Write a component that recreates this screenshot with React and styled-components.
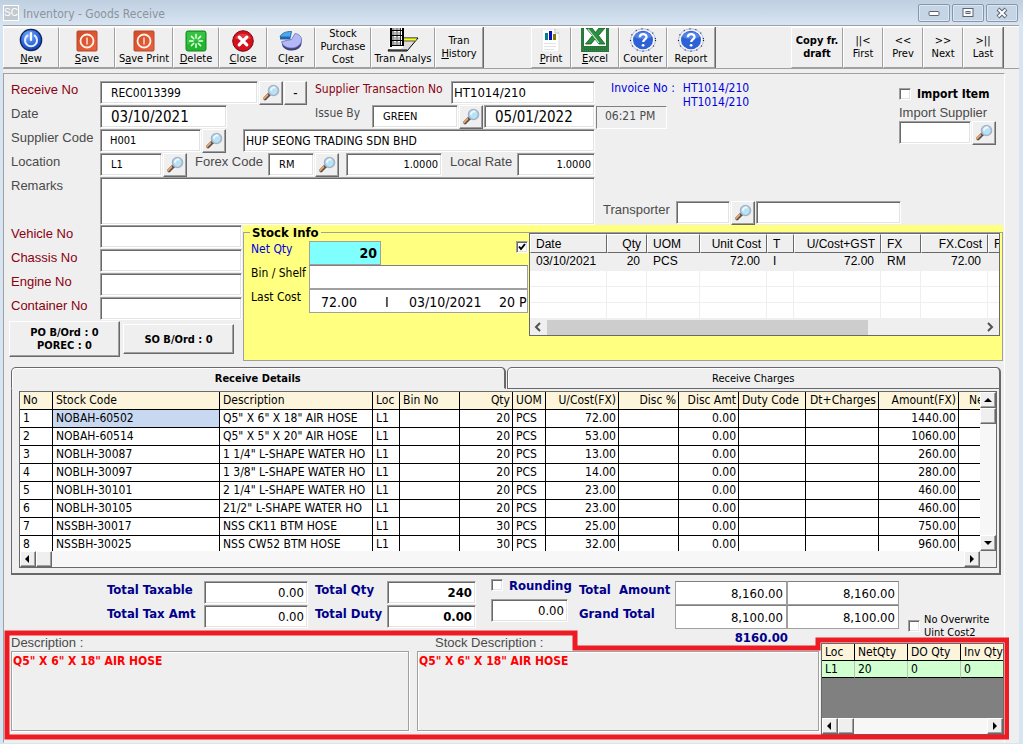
import React, { useState } from 'react'
import styled, { createGlobalStyle, css } from 'styled-components'

const tahoma = '"DejaVu Sans Condensed", "DejaVu Sans", sans-serif'
const arial = '"Liberation Sans", Arial, sans-serif'

const stockRows = [
  ['NOBAH-60502', 'Q5" X 6" X 18" AIR HOSE', '20', '72.00', '1440.00'],
  ['NOBAH-60514', 'Q5" X 5" X 20" AIR HOSE', '20', '53.00', '1060.00'],
  ['NOBLH-30087', '1 1/4" L-SHAPE WATER HO', '20', '13.00', '260.00'],
  ['NOBLH-30097', '1 3/8" L-SHAPE WATER HO', '20', '14.00', '280.00'],
  ['NOBLH-30101', '2 1/4" L-SHAPE WATER HO', '20', '23.00', '460.00'],
  ['NOBLH-30105', '21/2" L-SHAPE WATER HO', '20', '23.00', '460.00'],
  ['NSSBH-30017', 'NSS CK11 BTM HOSE', '30', '25.00', '750.00'],
  ['NSSBH-30025', 'NSS CW52 BTM HOSE', '30', '32.00', '960.00'],
]

const detailCols = [
  { name: 'No', w: 33 },
  { name: 'Stock Code', w: 167 },
  { name: 'Description', w: 153 },
  { name: 'Loc', w: 27 },
  { name: 'Bin No', w: 60 },
  { name: 'Qty', w: 53, right: true },
  { name: 'UOM', w: 33 },
  { name: 'U/Cost(FX)', w: 73, right: true },
  { name: 'Disc %', w: 60, right: true },
  { name: 'Disc Amt', w: 60, right: true },
  { name: 'Duty Code', w: 67 },
  { name: 'Dt+Charges', w: 73, right: true },
  { name: 'Amount(FX)', w: 80, right: true },
  { name: 'Net', w: 60, pad: 10 },
]

const costCols = [
  { name: 'Date', w: 77, value: '03/10/2021' },
  { name: 'Qty', w: 40, right: true, value: '20' },
  { name: 'UOM', w: 53, value: 'PCS' },
  { name: 'Unit Cost', w: 67, right: true, value: '72.00' },
  { name: 'T', w: 27, value: 'I' },
  { name: 'U/Cost+GST', w: 87, right: true, value: '72.00' },
  { name: 'FX', w: 40, value: 'RM' },
  { name: 'FX.Cost', w: 67, right: true, value: '72.00' },
  { name: 'FX Rate', w: 60, value: '' },
]

/* ---------- icons ---------- */

const PowerIcon = () => (
  <svg width="24" height="24" viewBox="0 0 24 24">
    <defs>
      <radialGradient id="pw" cx="40%" cy="30%" r="75%">
        <stop offset="0" stopColor="#7fb2ff" />
        <stop offset="0.6" stopColor="#2b63dd" />
        <stop offset="1" stopColor="#123aa5" />
      </radialGradient>
    </defs>
    <circle cx="12" cy="12" r="10.7" fill="url(#pw)" stroke="#0d2358" strokeWidth="1.2" />
    <path d="M8.3 7.6a6 6 0 1 0 7.4 0" fill="none" stroke="#e6efff" strokeWidth="2" strokeLinecap="round" />
    <path d="M12 5v7" stroke="#fff" strokeWidth="2.2" strokeLinecap="round" />
  </svg>
)

const SaveIcon = () => (
  <svg width="22" height="22" viewBox="0 0 22 22">
    <defs>
      <linearGradient id="sv" x1="0" y1="0" x2="1" y2="1">
        <stop offset="0" stopColor="#d04a26" />
        <stop offset="1" stopColor="#ea6440" />
      </linearGradient>
    </defs>
    <rect x="1" y="1" width="20" height="20" rx="1" fill="url(#sv)" stroke="#b5492a" />
    <circle cx="11" cy="11" r="6.5" fill="none" stroke="#fff0e8" strokeWidth="1.8" />
    <path d="M11 7.5v7" stroke="#f8c9b8" strokeWidth="1.8" />
  </svg>
)

const DeleteIcon = () => (
  <svg width="22" height="22" viewBox="0 0 22 22">
    <rect x="1" y="1" width="20" height="20" rx="2" fill="#22b52f" stroke="#14861f" />
    <path d="M2 2h18v7q-9 1-18 6z" fill="#45cd4f" opacity="0.6" />
    <g stroke="#e9ffe9" strokeWidth="1.5" strokeLinecap="round">
      <path d="M11 4.5v3.500M11 14v3.500M4.500 11H8M14 11h3.500M6.400 6.400l2.400 2.400M13.200 13.200l2.400 2.400M15.600 6.400l-2.400 2.400M8.800 13.200l-2.400 2.400" />
    </g>
  </svg>
)

const CloseIcon = () => (
  <svg width="22" height="22" viewBox="0 0 22 22">
    <circle cx="11" cy="11" r="10.3" fill="#d4101d" stroke="#7d0a12" strokeWidth="1" />
    <path d="M3 8.5a8.5 7 0 0 1 16 0q-8 3-16 0z" fill="#f0616a" opacity="0.5" />
    <path d="M7.2 7.2l7.6 7.6M14.8 7.2l-7.6 7.6" stroke="#fff" strokeWidth="3.2" strokeLinecap="round" />
  </svg>
)

const PieIcon = () => (
  <svg width="24" height="22" viewBox="0 0 24 22">
    <path d="M3 12v2.500c1 4 5 6 10 6s9.500-3 9.500-7.500V9z" fill="#3b3f7a" />
    <path d="M12.500 9.500L16 3.500C20 4 22.500 6.500 22.500 9.700c0 4.600-4.400 8.300-10 8.300-5.200 0-9.500-2.500-9.800-6.500z" fill="#b4b8f6" stroke="#6a6fc0" strokeWidth="0.800" />
    <path d="M11.500 7L12.500 1.500C7 1.200 2 3.500 1 7z" fill="#4ba8ee" stroke="#1c5f9c" strokeWidth="0.800" />
    <path d="M1 7h10.500v2.500H1z" fill="#1d66ae" />
  </svg>
)

const AnalysIcon = () => (
  <svg width="32" height="26" viewBox="0 0 32 26">
    <path d="M14 12h17L20 25H1l3-5z" fill="#dcdcdc" stroke="#000" />
    <path d="M17 12.500h13l-2 2.500H17z" fill="#ff0" />
    <path d="M17 15h11" stroke="#555" />
    <path d="M4 0h12v21l-2 2H2z" fill="#fff" />
    <path d="M4 0v21M16 0v20" stroke="#000" strokeWidth="2" />
    <path d="M6 0v20M10 0v20M13.500 0v20" stroke="#333" strokeWidth="1" />
    <path d="M4 4.500h12M4 9.500h12M4 14.500h12M4 19.500h12" stroke="#000" strokeWidth="1" />
    <path d="M7 1h2v3H7zM11 1h2v3h-2zM7 6h2v3H7zM11 6h2v3h-2zM7 11h2v3H7zM11 11h2v3h-2zM7 16h2v3H7zM11 16h2v3h-2z" fill="#b8b8b8" />
    <path d="M2 24h18" stroke="#000" />
  </svg>
)

const PrintIcon = () => (
  <svg width="20" height="23" viewBox="0 0 20 23">
    <path d="M1 0h13l4 4v19H1z" fill="#fff" stroke="#e2e2e2" />
    <path d="M14 0v4h4" fill="none" stroke="#bdbdbd" />
    <rect x="4" y="4" width="3" height="7" fill="#008080" />
    <rect x="8" y="2" width="3" height="9" fill="#0a0ac8" />
    <rect x="12" y="5" width="3" height="6" fill="#808000" />
    <path d="M3 14.500h12M3 17.500h12M3 20.500h10" stroke="#dfe3ea" />
  </svg>
)

const ExcelIcon = () => (
  <svg width="28" height="26" viewBox="0 0 28 26">
    <path d="M0 0h28v26H0z" fill="#1f7a33" />
    <path d="M3 0h22v20H3z" fill="#fff" />
    <path d="M1 1v24M27 1v24M0 22h28M0 24.500h28" stroke="#5c7563" strokeWidth="1" strokeDasharray="1 1" />
    <path d="M5 2h6l3.500 4.500L18 2h6l-6.500 7.500L24 18h-6l-4-5-4 5H4.500l7-8.500z" fill="#2a9140" stroke="#12561f" strokeWidth="0.800" />
    <path d="M7 3l11 14" stroke="#c8ecce" strokeWidth="1.200" />
  </svg>
)

const HelpIcon = () => (
  <svg width="28" height="24" viewBox="0 0 28 24">
    <ellipse cx="14" cy="12" rx="12.500" ry="11.200" fill="#f5f5fc" stroke="#b9badb" strokeWidth="1" />
    <ellipse cx="14" cy="12" rx="12.500" ry="11.200" fill="none" stroke="#20203c" strokeWidth="1.200" strokeDasharray="1 5" />
    <ellipse cx="14" cy="12" rx="10" ry="9.300" fill="#2c62d6" />
    <path d="M5 9a9.500 7.500 0 0 1 18 0q-9 4-18 0z" fill="#6f9bf0" opacity="0.600" />
    <path d="M10.800 9.300c.2-4.200 6.800-4.200 6.700-.3 0 2.400-3.300 2.400-3.300 5" fill="none" stroke="#fff" strokeWidth="2.300" />
    <circle cx="14.100" cy="17.300" r="1.400" fill="#fff" />
  </svg>
)

const Magnifier = () => (
  <svg width="18" height="18" viewBox="0 0 18 18">
    <path d="M3 14.500L7.500 10" stroke="#4a4a54" strokeWidth="3.600" strokeLinecap="round" />
    <path d="M2 14.500L5.500 11" stroke="#f0a35a" strokeWidth="1.800" strokeLinecap="round" />
    <circle cx="11.500" cy="6.500" r="5" fill="#b9e2f6" stroke="#a5b3c6" strokeWidth="1.600" />
    <path d="M9 6a3 3 0 0 1 3.500-2.500" stroke="#eefaff" strokeWidth="1.800" fill="none" strokeLinecap="round" />
  </svg>
)

const Arrow = ({ dir }) => {
  const d = {
    left: 'M6 1v8L2 5z',
    right: 'M3 1v8l4-4z',
    up: 'M1 7h8L5 3z',
    down: 'M1 3h8L5 7z',
  }[dir]
  return <svg width="10" height="10" viewBox="0 0 10 10"><path d={d} fill="#000" /></svg>
}

const Chevron = ({ dir }) => (
  <svg width="8" height="10" viewBox="0 0 8 10">
    <path d={dir === 'left' ? 'M6 1L2 5l4 4' : 'M2 1l4 4-4 4'} fill="none" stroke="#505050" strokeWidth="2" />
  </svg>
)

/* ---------- small pieces ---------- */

const Hot = ({ text }) => {
  const [before, key, after] = text.split('_')
  if (key === undefined) return text
  return <>{before}<u>{key}</u>{after}</>
}

const Search = ({ label }) => (
  <SearchButton type="button" aria-label={label}><Magnifier /></SearchButton>
)

const Tool = ({ icon, text, w, bold }) => (
  <ToolButton type="button" $w={w} $bold={bold} $icon={!!icon}>
    {icon}
    {text.map((t) => <span key={t}><Hot text={t} /></span>)}
  </ToolButton>
)

const Input = ({ id, value, ...rest }) => {
  const [text, setText] = useState(value || '')
  return <Field id={id} value={text} onChange={(e) => setText(e.target.value)} {...rest} />
}

export default function App() {
  const [tab, setTab] = useState('details')

  return (
    <>
      <GlobalStyle />
      <Window>
        <TitleBar>
          <Logo>SC</Logo>
          <Title>Inventory - Goods Receive</Title>
          <WinButton type="button" aria-label="Minimize">
            <svg width="12" height="12"><rect x="1" y="4.500" width="10" height="4" rx="1" fill="#fff" stroke="#5a6472" /></svg>
          </WinButton>
          <WinButton type="button" aria-label="Maximize">
            <svg width="12" height="12"><rect x="1" y="1.500" width="10" height="8" fill="#fff" stroke="#5a6472" /><rect x="4" y="4.500" width="4" height="2" fill="#c5d3e2" stroke="#5a6472" /></svg>
          </WinButton>
          <WinButton type="button" aria-label="Close window">
            <svg width="12" height="12"><path d="M2 2l8 8M10 2l-8 8" stroke="#5a6472" strokeWidth="4" /><path d="M2.500 2.500l7 7M9.500 2.500l-7 7" stroke="#fff" strokeWidth="2" /></svg>
          </WinButton>
        </TitleBar>

        <Toolbar>
          <ToolGroup>
            <Tool w={56} icon={<PowerIcon />} text={['_N_ew']} />
            <Tool w={56} icon={<SaveIcon />} text={['_S_ave']} />
            <Tool w={58} icon={<SaveIcon />} text={['S_a_ve Print']} />
            <Tool w={46} icon={<DeleteIcon />} text={['_D_elete']} />
            <Tool w={48} icon={<CloseIcon />} text={['_C_lose']} />
            <Tool w={48} icon={<PieIcon />} text={['C_l_ear']} />
            <Tool w={56} text={['Stock', 'Purchase', 'Cost']} />
            <Tool w={64} icon={<AnalysIcon />} text={['Tran Analys']} />
            <Tool w={48} text={['Tran', '_H_istory']} />
          </ToolGroup>
          <ToolGroup>
            <Tool w={40} icon={<PrintIcon />} text={['_P_rint']} />
            <Tool w={48} icon={<ExcelIcon />} text={['_E_xcel']} />
            <Tool w={48} icon={<HelpIcon />} text={['Counter']} />
            <Tool w={48} icon={<HelpIcon />} text={['Report']} />
          </ToolGroup>
          <ToolGroup>
            <Tool w={52} bold text={['Copy fr.', 'draft']} />
            <Tool w={40} text={['||<', 'First']} />
            <Tool w={40} text={['<<', 'Prev']} />
            <Tool w={40} text={['>>', 'Next']} />
            <Tool w={40} text={['>||', 'Last']} />
          </ToolGroup>
        </Toolbar>

        <Body>
          <TopArea>
            <Form>
              <Row>
                <Label htmlFor="receiveNo" $w={89} $red>Receive No</Label>
                <Input id="receiveNo" value="REC0013399" $w={158} $indent={10} />
                <Search label="Find receive no" />
                <MiniButton type="button">-</MiniButton>
                <Label htmlFor="transNo" $w={144} $pad={8} $red $tahoma>Supplier Transaction No</Label>
                <Input id="transNo" value="HT1014/210" $w={144} $size={13} />
              </Row>
              <Row>
                <Label htmlFor="date" $w={89}>Date</Label>
                <Input id="date" value="03/10/2021" $w={127} $indent={10} $size={15} />
                <Label htmlFor="issueBy" $w={145} $pad={88} $tahoma>Issue By</Label>
                <Input id="issueBy" value="GREEN" $w={86} $indent={10} $size={11} />
                <Search label="Find issuer" />
                <Input aria-label="Issue date" value="05/01/2022" $w={111} $indent={10} $size={15} />
              </Row>
              <Row>
                <Label htmlFor="supplier" $w={89}>Supplier Code</Label>
                <Input id="supplier" value="H001" $w={101} $indent={9} $size={11} />
                <Search label="Find supplier" />
                <Input aria-label="Supplier name" value="HUP SEONG TRADING SDN BHD" $w={352} $push />
              </Row>
              <Row>
                <Label htmlFor="location" $w={89}>Location</Label>
                <Input id="location" value="L1" $w={62} $indent={10} $size={11} />
                <Search label="Find location" />
                <Label htmlFor="forex" $w={80} $pad={7}>Forex Code</Label>
                <Input id="forex" value="RM" $w={46} $indent={10} $size={11} />
                <Search label="Find forex code" />
                <Input aria-label="Forex rate" value="1.0000" $w={96} $size={11} $right $push />
                <Label htmlFor="rate" $w={75} $pad={8}>Local Rate</Label>
                <Input id="rate" value="1.0000" $w={78} $size={11} $right />
              </Row>
              <Row $tall>
                <Label htmlFor="remarks" $w={89}>Remarks</Label>
                <Remarks id="remarks" />
              </Row>
            </Form>

            <Side>
              <SideTop>
                <div>
                  <Invoice>
                    <span>Invoice No :</span>
                    <span>HT1014/210<br />HT1014/210</span>
                  </Invoice>
                  <Time>06:21 PM</Time>
                </div>
                <Import>
                  <CheckLabel $bold><Check type="checkbox" />Import Item</CheckLabel>
                  <Label htmlFor="importSupplier">Import Supplier</Label>
                  <Row>
                    <Input id="importSupplier" $w={72} />
                    <Search label="Find import supplier" />
                  </Row>
                </Import>
              </SideTop>
              <Row>
                <Label htmlFor="transporter" $w={81} $pad={8}>Transporter</Label>
                <Input id="transporter" $w={54} />
                <Search label="Find transporter" />
                <Input aria-label="Transporter name" $w={145} />
              </Row>
            </Side>
          </TopArea>

          <MiddleArea>
            <VehicleForm>
              {['Vehicle No', 'Chassis No', 'Engine No', 'Container No'].map((name) => (
                <Row key={name}>
                  <Label htmlFor={name} $w={89} $red>{name}</Label>
                  <Input id={name} $w={142} />
                </Row>
              ))}
              <OrderButtons>
                <OrderButton type="button" $tall>PO B/Ord : 0<br />POREC : 0</OrderButton>
                <OrderButton type="button">SO B/Ord : 0</OrderButton>
              </OrderButtons>
            </VehicleForm>

            <StockPanel>
              <StockInfo>
                <legend>Stock Info</legend>
                <StockBody>
                  <StockFields>
                    <Row>
                      <Label htmlFor="netQty" $w={59} $tahoma $color="#0000e0" $pad={1}>Net Qty</Label>
                      <NetQty id="netQty" defaultValue="20" />
                      <Check type="checkbox" defaultChecked aria-label="Show cost history" />
                    </Row>
                    <Row>
                      <Label htmlFor="bin" $w={59} $tahoma $color="#000" $pad={1}>Bin / Shelf</Label>
                      <Input id="bin" $w={219} $flat />
                    </Row>
                    <Row>
                      <Label as="span" $w={59} $tahoma $color="#000" $pad={1}>Last Cost</Label>
                      <LastCost>
                        <span>72.00</span><span>I</span><span>03/10/2021</span><span>20 P</span>
                      </LastCost>
                    </Row>
                  </StockFields>
                  <CostList>
                    <CostTable>
                      <colgroup>{costCols.map((c) => <col key={c.name} width={c.w} />)}</colgroup>
                      <thead>
                        <tr>{costCols.map((c) => <CostHead key={c.name} $right={c.right}>{c.name}</CostHead>)}</tr>
                      </thead>
                      <tbody>
                        <tr>{costCols.map((c) => <CostCell key={c.name} $right={c.right} $on>{c.value}</CostCell>)}</tr>
                        {[1, 2, 3].map((n) => (
                          <tr key={n}>{costCols.map((c) => <CostCell key={c.name} />)}</tr>
                        ))}
                      </tbody>
                    </CostTable>
                    <FlatScroll>
                      <Chevron dir="left" />
                      <FlatTrack><FlatThumb /></FlatTrack>
                      <Chevron dir="right" />
                    </FlatScroll>
                  </CostList>
                </StockBody>
              </StockInfo>
            </StockPanel>
          </MiddleArea>

          <Tabs>
            <TabHeads role="tablist">
              <Tab type="button" role="tab" aria-selected={tab === 'details'} $on={tab === 'details'} onClick={() => setTab('details')}>Receive Details</Tab>
              <Tab type="button" role="tab" aria-selected={tab === 'charges'} $on={tab === 'charges'} onClick={() => setTab('charges')}>Receive Charges</Tab>
            </TabHeads>
            <TabBody>
              <Grid>
                <GridMain>
                  <GridView>
                    <DetailTable>
                      <colgroup>{detailCols.map((c) => <col key={c.name} width={c.w} />)}</colgroup>
                      <thead>
                        <tr>{detailCols.map((c) => <DetailHead key={c.name} $right={c.right} $pad={c.pad}>{c.name}</DetailHead>)}</tr>
                      </thead>
                      <tbody>
                        {stockRows.map(([code, desc, qty, cost, amount], i) => {
                          const cells = [i + 1, code, desc, 'L1', '', qty, 'PCS', cost, '', '0.00', '', '', amount, '']
                          return (
                            <tr key={code}>
                              {cells.map((cell, n) => (
                                <DetailCell key={n} $right={detailCols[n].right} $on={i === 0 && n === 1}>{cell}</DetailCell>
                              ))}
                            </tr>
                          )
                        })}
                      </tbody>
                    </DetailTable>
                  </GridView>
                  <VScroll>
                    <ScrollButton type="button" aria-label="Scroll up"><Arrow dir="up" /></ScrollButton>
                    <Thumb />
                    <Track />
                    <ScrollButton type="button" aria-label="Scroll down"><Arrow dir="down" /></ScrollButton>
                  </VScroll>
                </GridMain>
                <HScroll $corner>
                  <ScrollButton type="button" aria-label="Scroll left"><Arrow dir="left" /></ScrollButton>
                  <Thumb />
                  <Track />
                  <ScrollButton type="button" aria-label="Scroll right"><Arrow dir="right" /></ScrollButton>
                </HScroll>
              </Grid>
            </TabBody>
          </Tabs>

          <Totals>
            <TotalGroup $label={97} $field={104}>
              <TotalLabel htmlFor="taxable">Total Taxable</TotalLabel>
              <Input id="taxable" value="0.00" $size={13} $right />
              <TotalLabel htmlFor="taxAmt">Total Tax Amt</TotalLabel>
              <Input id="taxAmt" value="0.00" $size={13} $right />
            </TotalGroup>
            <TotalGroup $label={72} $field={89}>
              <TotalLabel htmlFor="totalQty">Total Qty</TotalLabel>
              <Input id="totalQty" value="240" $size={13} $right $bold />
              <TotalLabel htmlFor="totalDuty">Total Duty</TotalLabel>
              <Input id="totalDuty" value="0.00" $size={13} $right $bold />
            </TotalGroup>
            <Rounding>
              <CheckLabel $bold $navy><Check type="checkbox" />Rounding</CheckLabel>
              <Input aria-label="Rounding amount" value="0.00" $w={77} $size={13} $right />
            </Rounding>
            <TotalGroup $label={96} $field={112} $double>
              <TotalLabel htmlFor="totalAmount">Total&nbsp; Amount</TotalLabel>
              <Input id="totalAmount" value="8,160.00" $size={13} $right $flat />
              <Input aria-label="Total amount local" value="8,160.00" $size={13} $right $flat />
              <TotalLabel htmlFor="grandTotal">Grand Total</TotalLabel>
              <Input id="grandTotal" value="8,100.00" $size={13} $right $flat />
              <Input aria-label="Grand total local" value="8,100.00" $size={13} $right $flat />
            </TotalGroup>
            <Overwrite>
              <Check type="checkbox" />
              <span>No Overwrite<br />Uint Cost2</span>
            </Overwrite>
          </Totals>

          <Bottom>
            <DescColumn>
              <DescHead><Label as="h2">Description :</Label></DescHead>
              <DescBox>Q5" X 6" X 18" AIR HOSE</DescBox>
            </DescColumn>
            <DescColumn>
              <DescHead $inset>
                <Label as="h2">Stock Description :</Label>
                <NetTotal>8160.00</NetTotal>
              </DescHead>
              <DescBox>Q5" X 6" X 18" AIR HOSE</DescBox>
            </DescColumn>
            <LocGrid>
              <LocView>
                <LocTable>
                  <thead>
                    <tr><th>Loc</th><th>NetQty</th><th>DO Qty</th><th>Inv Qty</th></tr>
                  </thead>
                  <tbody>
                    <tr><td>L1</td><td>20</td><td>0</td><td>0</td></tr>
                  </tbody>
                </LocTable>
              </LocView>
              <HScroll>
                <ScrollButton type="button" aria-label="Scroll left"><Arrow dir="left" /></ScrollButton>
                <Thumb />
                <Track />
                <ScrollButton type="button" aria-label="Scroll right"><Arrow dir="right" /></ScrollButton>
              </HScroll>
            </LocGrid>
            <Outline viewBox="0 0 1005 110" preserveAspectRatio="none">
              <path d="M3 3H571V18H814V10H1003V107H3Z" fill="none" stroke="#ed1c24" strokeWidth="5" vectorEffect="non-scaling-stroke" />
            </Outline>
          </Bottom>
        </Body>
      </Window>
    </>
  )
}

/* ---------- styles ---------- */

const GlobalStyle = createGlobalStyle`
  * {
    box-sizing: border-box;
  }

  body {
    margin: 0;
    background: #d7e4f2;
    font-family: ${tahoma};
    font-size: 12px;
    color: #000;
  }

  button, input, textarea {
    font-family: inherit;
    margin: 0;
    border-radius: 0;
  }

  svg {
    display: block;
    flex: none;
  }
`

const raised = css`
  background: #efefef;
  border: 1px solid;
  border-color: #fff #696969 #696969 #fff;
  box-shadow: inset -1px -1px #a0a0a0;
`

const sunken = css`
  border: 1px solid;
  border-color: #a0a0a0 #fff #fff #a0a0a0;
  box-shadow: inset 1px 1px #696969, inset -1px -1px #e3e3e3;
`

const Window = styled.div`
  display: flex;
  flex-direction: column;
  min-width: 1000px;
  padding: 0 4px 2px 3px;
  background: linear-gradient(#bfcfe0, #d7e4f2 25px);
`

const TitleBar = styled.header`
  display: flex;
  align-items: center;
  gap: 2px;
  height: 25px;
  padding-right: 1px;
`

const Logo = styled.span`
  width: 16px;
  height: 16px;
  border: 1px solid #fff;
  background: #c3c9d0;
  color: #fff;
  font: 10px/14px ${arial};
  text-align: center;
`

const Title = styled.h1`
  flex: 1;
  margin: 0;
  padding: 2px 0 0 2px;
  font-size: 12px;
  font-weight: normal;
  color: #8c939b;
`

const WinButton = styled.button`
  display: flex;
  align-items: center;
  justify-content: center;
  width: 32px;
  height: 18px;
  padding: 0;
  border: 1px solid #8796ad;
  border-radius: 2px;
  background: #c6d5e6;
  box-shadow: inset 0 0 0 1px #dbe6f1;
`

const ToolGroup = styled.div`
  display: flex;
  border-right: 1px solid #696969;
`

const Toolbar = styled.nav`
  display: flex;
  height: 44px;
  padding: 1px 15px 0 0;
  background: #efefef;
  border-top: 1px solid #a0a0a0;
  border-bottom: 1px solid #a0a0a0;
  box-shadow: inset 0 1px #fff;

  ${ToolGroup}:first-child {
    margin-right: 47px;
  }

  ${ToolGroup}:last-child {
    margin-left: auto;
  }
`

const ToolButton = styled.button`
  display: flex;
  flex-direction: column;
  align-items: center;
  justify-content: ${(p) => (p.$icon ? 'flex-end' : 'center')};
  width: ${(p) => p.$w}px;
  height: 41px;
  padding: 0 0 2px;
  overflow: hidden;
  background: #efefef;
  border: 1px solid;
  border-color: #fff #a0a0a0 #a0a0a0 #fff;
  font-size: 11px;
  font-weight: ${(p) => (p.$bold ? 'bold' : 'normal')};
  line-height: 13px;
  white-space: nowrap;
  color: #000;
`

const Body = styled.main`
  margin-right: 14px;
  padding: 7px 0 3px;
  background: #efefef;
  border: 1px solid;
  border-color: #a0a0a0 #fff #efefef #a0a0a0;
  box-shadow: 14px 0 #efefef, 0 -4px #efefef, 14px -4px #efefef;
  margin-top: 4px;
`

const TopArea = styled.section`
  display: flex;
  padding-left: 7px;
`

const Form = styled.div`
  flex: none;
`

const Row = styled.div`
  display: flex;
  height: ${(p) => (p.$tall ? 48 : 24)}px;
`

const Label = styled.label`
  flex: none;
  width: ${(p) => (p.$w ? p.$w + 'px' : 'auto')};
  margin: 0;
  padding-left: ${(p) => p.$pad || 0}px;
  font-family: ${(p) => (p.$tahoma ? tahoma : arial)};
  font-size: ${(p) => (p.$tahoma ? 12 : 13)}px;
  font-weight: normal;
  line-height: 17px;
  white-space: nowrap;
  color: ${(p) => p.$color || (p.$red ? '#8b0010' : '#4a4a4a')};
`

const Field = styled.input`
  flex: none;
  width: ${(p) => (p.$w ? p.$w + 'px' : '100%')};
  height: ${(p) => (p.$flat ? 24 : 23)}px;
  padding: 0 3px 0 ${(p) => p.$indent || 2}px;
  background: #fff;
  color: #000;
  font-size: ${(p) => p.$size || 12}px;
  font-weight: ${(p) => (p.$bold ? 'bold' : 'normal')};
  text-align: ${(p) => (p.$right ? 'right' : 'left')};
  ${sunken}
  ${(p) => p.$push && 'margin-left: auto;'}
  ${(p) => p.$flat && 'border-color: #808080 #a0a0a0 #a0a0a0; box-shadow: none;'}
`

const Remarks = styled.textarea`
  flex: 1;
  height: 48px;
  resize: none;
  background: #fff;
  ${sunken}
`

const SearchButton = styled.button`
  flex: none;
  display: flex;
  align-items: center;
  justify-content: center;
  width: 24px;
  height: 24px;
  margin: 0 1px;
  padding: 0;
  ${raised}
`

const MiniButton = styled.button`
  width: 23px;
  height: 24px;
  padding: 0;
  ${raised}
`

const Side = styled.div`
  flex: 1;
  display: flex;
  flex-direction: column;
  justify-content: space-between;
`

const SideTop = styled.div`
  display: flex;
  justify-content: space-between;
  padding: 0 7px 0 1px;
`

const Invoice = styled.div`
  display: flex;
  gap: 8px;
  height: 25px;
  padding-left: 15px;
  line-height: 14px;
  color: #0000e0;
`

const Time = styled.div`
  width: 71px;
  height: 23px;
  padding-left: 8px;
  line-height: 18px;
  color: #4a4a4a;
  border: 1px solid;
  border-color: #808080 #fff #fff #808080;
`

const Import = styled.div`
  display: flex;
  flex-direction: column;
  width: 98px;
  padding-top: 3px;
`

const CheckLabel = styled.label`
  display: flex;
  align-items: center;
  gap: 6px;
  height: 20px;
  font-size: 12px;
  font-weight: ${(p) => (p.$bold ? 'bold' : 'normal')};
  white-space: nowrap;
  ${(p) => p.$navy && 'color: #00008b; font-size: 13px;'}
`

const Check = styled.input`
  appearance: none;
  flex: none;
  width: 12px;
  height: 12px;
  background: #fff;
  ${sunken}

  &:checked {
    background: #fff url("data:image/svg+xml,%3Csvg xmlns='http://www.w3.org/2000/svg' viewBox='0 0 10 10'%3E%3Cpath d='M2 4.500l2 2.500 4-5' fill='none' stroke='%23000' stroke-width='2'/%3E%3C/svg%3E");
  }
`

const MiddleArea = styled.section`
  display: flex;
  height: 136px;
  padding-right: 1px;
`

const VehicleForm = styled.div`
  width: 239px;
  flex: none;

  ${Row} {
    padding-left: 7px;
  }
`

const OrderButtons = styled.div`
  display: flex;
  align-items: center;
  gap: 3px;
  padding-left: 5px;
`

const OrderButton = styled.button`
  width: 111px;
  height: ${(p) => (p.$tall ? 36 : 30)}px;
  padding: 0;
  font-size: 11px;
  font-weight: bold;
  line-height: 13px;
  ${raised}
`

const StockPanel = styled.div`
  flex: 1;
  min-width: 0;
  background: #ffff80;
`

const StockInfo = styled.fieldset`
  min-width: 0;
  height: 136px;
  margin: 0;
  padding: 0 2px 0 6px;
  border: 1px solid #a0a0a0;

  legend {
    margin-left: 0;
    padding: 0 2px;
    font-size: 13px;
    font-weight: bold;
    line-height: 15px;
  }
`

const StockBody = styled.div`
  display: flex;
`

const StockFields = styled.div`
  flex: none;
  width: 279px;
  padding-top: 1px;
`

const NetQty = styled.input`
  width: 72px;
  height: 24px;
  margin-right: auto;
  padding: 0 3px;
  border: 1px solid #a0a0a0;
  background: #80ffff;
  color: #000;
  font-size: 14px;
  font-weight: bold;
  text-align: right;

  & + ${Check} {
    margin-right: 1px;
  }
`

const LastCost = styled.output`
  display: grid;
  grid-template-columns: 64px 24px 90px 1fr;
  width: 219px;
  height: 24px;
  padding-left: 11px;
  overflow: hidden;
  border: 1px solid #a0a0a0;
  background: #fff;
  font-size: 14px;
  line-height: 25px;
  white-space: nowrap;
`

const CostList = styled.div`
  flex: 1;
  min-width: 0;
  height: 103px;
  margin-top: -7px;
  overflow: hidden;
  border: 1px solid #696969;
  background: #fff;
`

const CostTable = styled.table`
  width: 0;
  table-layout: fixed;
  border-collapse: separate;
  border-spacing: 0;
  font: 12px ${arial};
`

const CostHead = styled.th`
  height: 19px;
  padding: 0 5px;
  overflow: hidden;
  background: #efefef;
  border: 1px solid;
  border-color: #fff #696969 #696969 #fff;
  font-weight: normal;
  text-align: ${(p) => (p.$right ? 'right' : 'left')};
  white-space: nowrap;
`

const CostCell = styled.td`
  height: ${(p) => (p.$on ? 18 : 16)}px;
  padding: 0 6px;
  background: ${(p) => (p.$on ? '#efefef' : '#fff')};
  border-right: 1px solid #efefef;
  border-bottom: 1px solid #efefef;
  line-height: 15px;
  text-align: ${(p) => (p.$right ? 'right' : 'left')};
`

const FlatScroll = styled.div`
  display: flex;
  align-items: center;
  justify-content: space-between;
  height: 16px;
  padding: 0 5px 0 4px;
  background: #efefef;
`

const FlatTrack = styled.div`
  flex: 1;
  height: 15px;
  margin: 0 5px;
`

const FlatThumb = styled.div`
  width: 74%;
  height: 100%;
  background: #cdcdcd;
`

const Tabs = styled.section`
  margin: 6px 3px 0 7px;
`

const TabHeads = styled.div`
  display: flex;
  gap: 1px;
`

const Tab = styled.button`
  flex: 1;
  height: 22px;
  padding: 0;
  background: #efefef;
  border: 1px solid #696969;
  border-bottom-color: ${(p) => (p.$on ? '#efefef' : '#696969')};
  border-right-width: 2px;
  border-radius: 5px 5px 0 0;
  box-shadow: inset 1px 1px #fff;
  font-size: 11px;
  font-weight: ${(p) => (p.$on ? 'bold' : 'normal')};
`

const TabBody = styled.div`
  padding: 2px 2px 5px 7px;
  border: solid #696969;
  border-width: 0 2px 2px 1px;
`

const Grid = styled.div`
  border: 1px solid #696969;
  background: #fff;
`

const GridMain = styled.div`
  display: flex;
  height: 159px;
`

const GridView = styled.div`
  flex: 1;
  min-width: 0;
  overflow: hidden;
`

const DetailTable = styled.table`
  width: 0;
  table-layout: fixed;
  border-collapse: separate;
  border-spacing: 0;
`

const DetailHead = styled.th`
  height: 18px;
  padding: 0 2px 0 ${(p) => p.$pad || 3}px;
  overflow: hidden;
  background: #fcf5dc;
  border: solid #000;
  border-width: 0 1px 1px 0;
  font-weight: normal;
  line-height: 17px;
  text-align: ${(p) => (p.$right ? 'right' : 'left')};
  white-space: nowrap;
`

const DetailCell = styled.td`
  height: 18px;
  padding: 0 2px 0 3px;
  overflow: hidden;
  background: ${(p) => (p.$on ? '#c9d8f1' : '#fff')};
  border: solid #000;
  border-width: 0 1px 1px 0;
  line-height: 17px;
  text-align: ${(p) => (p.$right ? 'right' : 'left')};
  white-space: nowrap;
`

const ScrollButton = styled.button`
  flex: none;
  display: flex;
  align-items: center;
  justify-content: center;
  width: 16px;
  height: 16px;
  padding: 0;
  ${raised}
`

const Thumb = styled.div`
  flex: none;
  width: 16px;
  height: 16px;
  ${raised}
`

const Track = styled.div`
  flex: 1;
  background: #f7f7f7;
`

const VScroll = styled.div`
  display: flex;
  flex-direction: column;
  width: 16px;
`

const HScroll = styled.div`
  display: flex;
  height: 16px;
  background: #efefef;
  padding-right: ${(p) => (p.$corner ? 16 : 0)}px;
`

const Totals = styled.section`
  display: flex;
  height: 56px;
  padding-left: 103px;
`

const TotalGroup = styled.div`
  display: grid;
  grid-template-columns: ${(p) => `${p.$label}px ${p.$field}px ${p.$double ? p.$field + 'px' : ''}`};
  grid-auto-rows: 24px;
  align-content: start;
  padding-top: 6px;
  margin-right: ${(p) => (p.$double ? 9 : 7)}px;

  & + & {
    margin-right: 15px;
  }
`

const TotalLabel = styled.label`
  font-size: 13px;
  font-weight: bold;
  line-height: 17px;
  white-space: nowrap;
  color: #00008b;
`

const Rounding = styled.div`
  display: flex;
  flex-direction: column;
  justify-content: space-between;
  width: 81px;
  height: 47px;
  margin-right: 7px;
`

const Overwrite = styled.label`
  display: flex;
  align-items: center;
  gap: 4px;
  height: 26px;
  margin-top: 38px;
  font-size: 11px;
  line-height: 13px;
  white-space: nowrap;
`

const Bottom = styled.section`
  position: relative;
  display: flex;
  height: 108px;
  padding: 0 0 4px 7px;
`

const DescColumn = styled.div`
  flex: 1 1 0;
  margin-right: 8px;

  & + & {
    flex-basis: 4px;
    margin-right: 2px;
  }
`

const DescHead = styled.div`
  display: flex;
  justify-content: space-between;
  align-items: flex-end;
  height: 20px;
  padding: ${(p) => (p.$inset ? '0 31px 0 18px' : 0)};
`

const NetTotal = styled.output`
  align-self: flex-start;
  font-size: 13px;
  font-weight: bold;
  line-height: 14px;
  color: #00008b;
`

const DescBox = styled.div`
  height: 80px;
  padding: 2px 1px;
  border: 1px solid #a0a0a0;
  box-shadow: inset 1px 1px #fff, 1px 1px #fff;
  font-weight: bold;
  line-height: 15px;
  color: #f00;
`

const LocGrid = styled.div`
  display: flex;
  flex-direction: column;
  width: 183px;
  margin-top: 12px;
  border: 1px solid #696969;
  background: #808080;
`

const LocView = styled.div`
  flex: 1;
  overflow: hidden;
`

const LocTable = styled.table`
  width: 192px;
  table-layout: fixed;
  border-collapse: separate;
  border-spacing: 0;

  th, td {
    width: 53px;
    height: 17px;
    padding: 0 3px;
    border: solid #000;
    border-width: 0 1px 1px 0;
    font-weight: normal;
    line-height: 16px;
    text-align: left;
    white-space: nowrap;
  }

  th:first-child {
    width: 33px;
  }

  th {
    background: #fcf5dc;
  }

  td {
    background: #d0ffd0;
    border-right-color: #c0c0c0;
  }
`

const Outline = styled.svg`
  position: absolute;
  top: -1px;
  left: 0;
  width: calc(100% + 5px);
  height: 110px;
  pointer-events: none;
`
